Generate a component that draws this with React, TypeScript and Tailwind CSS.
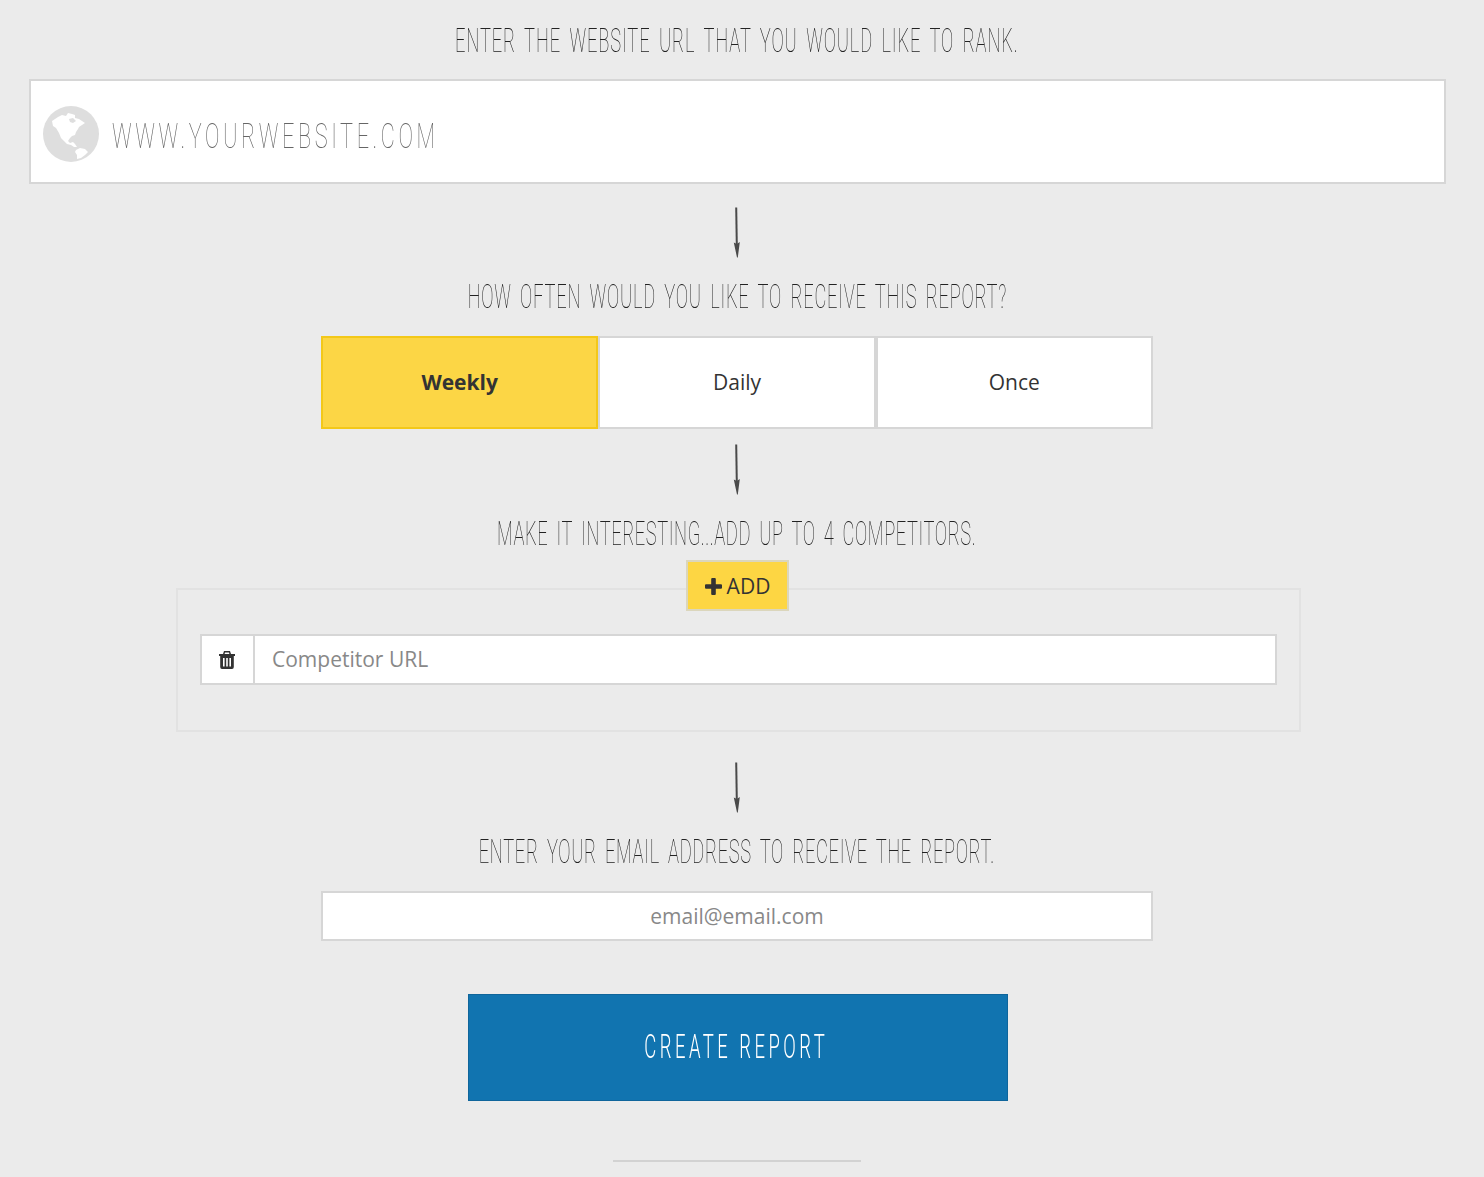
const sans = "font-['Open_Sans',sans-serif]";

const Heading = ({ text, className }: { text: string; className: string }) => (
  <h2 className={`flex h-10 items-center justify-center whitespace-nowrap ${className}`}>
    <span className="inline-block origin-center scale-x-[0.54] font-['Roboto',sans-serif] text-[34px] font-thin leading-10 text-[#222] grayscale [word-spacing:6px]">
      {text}
    </span>
  </h2>
);

const Arrow = ({ className }: { className: string }) => (
  <svg className={className} width="12" height="51" viewBox="0 0 12 51" fill="none">
    <path d="M5.2 0.5 C5.4 12 5.6 24 5.8 38" stroke="#4a4a4a" strokeWidth="2" />
    <path d="M2.8 35.5 L5.8 37 L8.8 35 L6.8 50.5 L6 50.5 Z" fill="#4a4a4a" />
  </svg>
);

const Globe = () => (
  <svg width="56" height="56" viewBox="5 6 56 56" className="mt-[4px] shrink-0">
    <circle cx="33" cy="34" r="28" fill="#dedede" />
    <path
      d="M14 21 L20 17 L24 15 L28 16 L30 13 L34 14 L37 15 L37 18 L41 19 L44 21 L47 23 L44 25 L41 27 L40 29 L38 32 L37 35 L34 36 L32 38 L30 41 L32 43 L35 42 L37 44 L39 47 L36 47 L33 45 L29 44 L26 41 L23 38 L21 33 L18 28 L15 26 Z"
      fill="#fff"
    />
    <path d="M31 19 L35 18 L38 21 L35 23 L32 22 Z" fill="#dedede" />
    <path d="M38 50 L42 48 L47 49 L50 52 L47 55 L43 58 L39 59 L39 55 L37 52 Z" fill="#fff" />
  </svg>
);

const Trash = () => (
  <svg width="16" height="18" viewBox="0 0 16 18" fill="#333">
    <path
      fillRule="evenodd"
      d="M5 0 H11 L12 3 H16 V5 H14.8 V16 Q14.8 18 13 18 H3 Q1.2 18 1.2 16 V5 H0 V3 H4 Z M6 1.6 L5.6 3 H10.4 L10 1.6 Z M4 7 V15.5 H5.6 V7 Z M7.2 7 V15.5 H8.8 V7 Z M10.4 7 V15.5 H12 V7 Z"
    />
  </svg>
);

const Plus = () => (
  <svg width="17" height="17" viewBox="0 0 17 17" fill="#333">
    <path d="M6.2 1 Q6.2 0 7.2 0 H9.8 Q10.8 0 10.8 1 V6.2 H16 Q17 6.2 17 7.2 V9.8 Q17 10.8 16 10.8 H10.8 V16 Q10.8 17 9.8 17 H7.2 Q6.2 17 6.2 16 V10.8 H1 Q0 10.8 0 9.8 V7.2 Q0 6.2 1 6.2 H6.2 Z" />
  </svg>
);

export default function App() {
  return (
    <div className={`h-[1177px] w-full overflow-hidden bg-[#ebebeb] ${sans}`}>
      <div className="flex w-[1474px] flex-col items-center pt-5">
        <Heading text="ENTER THE WEBSITE URL THAT YOU WOULD LIKE TO RANK." className="tracking-[1.6px]" />

        <div className="ml-[1px] mt-[19px] flex h-[105px] w-[1417px] items-center border-2 border-[#d6d6d6] bg-white pl-[12px]">
          <Globe />
          <span className="ml-[13px] mt-[12px] inline-block origin-left scale-x-[0.62] whitespace-nowrap font-['Roboto',sans-serif] text-[35px] font-thin tracking-[5.8px] text-[#666] grayscale">
            WWW.YOURWEBSITE.COM
          </span>
        </div>

        <Arrow className="mt-[23px]" />
        <Heading text="HOW OFTEN WOULD YOU LIKE TO RECEIVE THIS REPORT?" className="mt-[18px] tracking-[1.4px]" />

        <div className="mt-5 flex h-[93px] w-[832px] text-[21px] text-[#333]">
          <button className="flex-1 border-2 border-[#f3c819] bg-[#fcd645] font-bold">Weekly</button>
          <button className="flex-1 border-2 border-[#d6d6d6] bg-white">Daily</button>
          <button className="flex-1 border-2 border-[#d6d6d6] bg-white">Once</button>
        </div>

        <Arrow className="mt-[15px]" />
        <Heading text="MAKE IT INTERESTING...ADD UP TO 4 COMPETITORS." className="mt-[18px] tracking-[1.05px]" />

        <button className="relative z-10 ml-[1px] mt-[7px] -mb-[23px] flex h-[51px] w-[103px] items-center justify-center gap-[5px] border-2 border-[#dbd6bc] bg-[#fdd643] pt-[2px] text-[21px] text-[#333]">
          <Plus />
          ADD
        </button>
        <div className="ml-[3px] h-[144px] w-[1125px] border-2 border-[#e2e2e2] pl-[22px] pr-[22px] pt-[44px]">
          <div className="flex h-[51px] border-2 border-[#d6d6d6] bg-white">
            <div className="flex w-[53px] items-center justify-center border-r-2 border-[#d6d6d6] pr-[2px]">
              <Trash />
            </div>
            <input
              placeholder="Competitor URL"
              className="flex-1 px-[17px] text-[21px] outline-none placeholder:text-[#888]"
            />
          </div>
        </div>

        <Arrow className="mt-[30px]" />
        <Heading text="ENTER YOUR EMAIL ADDRESS TO RECEIVE THE REPORT." className="mt-[18px] tracking-[1.2px]" />

        <input
          placeholder="email@email.com"
          className="mt-5 h-[50px] w-[832px] border-2 border-[#d6d6d6] bg-white text-center text-[21px] outline-none placeholder:text-[#888]"
        />

        <button className="ml-[1px] mt-[53px] flex h-[107px] w-[540px] items-center justify-center border border-[#0f659b] bg-[#1174b0]">
          <span className="-ml-[3px] -mt-[2px] inline-block scale-x-[0.56] whitespace-nowrap font-['Roboto',sans-serif] text-[33px] font-light tracking-[6.2px] text-white">
            CREATE REPORT
          </span>
        </button>

        <hr className="mt-[59px] w-[248px] border-t-2 border-[#d2d2d2]" />
      </div>
    </div>
  );
}
